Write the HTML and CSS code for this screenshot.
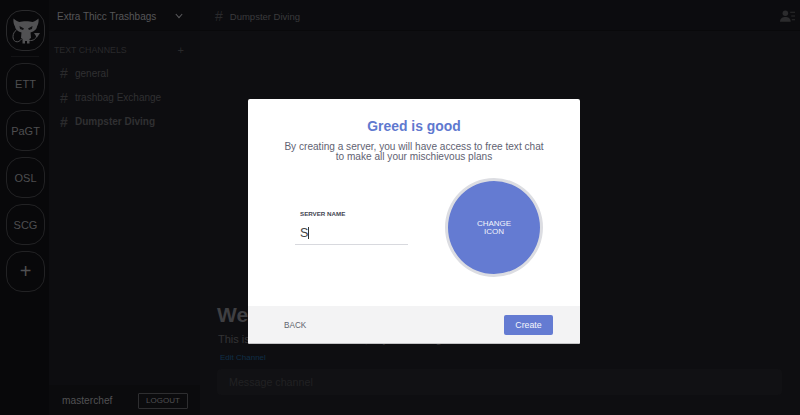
FILE: index.html
```html
<!DOCTYPE html>
<html lang="en">
<head>
<meta charset="utf-8">
<title>Greed is good</title>
<link rel="stylesheet" href="styles.css">
</head>
<body>
<div class="app">
  <nav class="rail">
    <div class="srv logo">
      <svg class="devil" viewBox="0 0 34 34" width="34" height="34">
        <path class="fill" d="M4.500 4.500 C6.500 6.500 8.500 7.500 10.500 8 C13 7 21 7 23.500 8 C25.500 7.500 27.500 6.500 29.500 4.500 C30 8 29 11 28 12.500 C27.500 16.500 23 19 17 19 C11 19 6.500 16.500 6 12.500 C5 11 4 8 4.500 4.500 Z"/>
        <path class="fill" d="M12.500 18 H21.500 L22 24 L20.500 25 V29.500 H18 V27 H16 V29.500 H13.500 V25 L12 24 Z"/>
        <path class="eye" d="M10.500 12 L15 14.500 L14 16 L11 15 Z M23.500 12 L19 14.500 L20 16 L23 15 Z"/>
        <path class="tail" d="M7.500 16 C3 19 3 26 6.500 27.500 C9 28.500 11 27 12.500 25 M20 26.500 C24 27 28 25 28 20"/>
        <path class="fill" d="M25 19 L31 19 L28 23.500 Z"/>
      </svg>
    </div>
    <div class="rule"></div>
    <div class="srv">ETT</div>
    <div class="srv">PaGT</div>
    <div class="srv">OSL</div>
    <div class="srv">SCG</div>
    <div class="srv plus">+</div>
  </nav>
  <aside class="side">
    <header class="side-head">
      <span class="team">Extra Thicc Trashbags</span>
      <svg class="chev" viewBox="0 0 10 7" width="8" height="6"><path d="M1 1 L5 5.500 L9 1"/></svg>
    </header>
    <div class="side-body">
      <div class="cat"><span>TEXT CHANNELS</span><span class="cat-plus">+</span></div>
      <div class="chan"><span class="hash">#</span><span>general</span></div>
      <div class="chan"><span class="hash">#</span><span>trashbag Exchange</span></div>
      <div class="chan active"><span class="hash">#</span><span>Dumpster Diving</span></div>
    </div>
    <footer class="user">
      <span class="uname">masterchef</span>
      <span class="logout">LOGOUT</span>
    </footer>
  </aside>
  <main class="main">
    <header class="top">
      <div class="top-title"><span class="top-hash">#</span><span>Dumpster Diving</span></div>
      <svg class="members" viewBox="0 0 14 12" width="15" height="13">
        <circle cx="5" cy="3" r="2.600"/>
        <path d="M0 11 C0 7.500 2.500 6.500 5 6.500 C7.500 6.500 10 7.500 10 11 Z"/>
        <path d="M9.500 1.500 H14 V2.500 H9.500 Z M10.500 5 H14 V6 H10.500 Z M11 8.500 H14 V9.500 H11 Z"/>
      </svg>
    </header>
    <section class="welcome">
      <h1>Welcome to #Dumpster Diving</h1>
      <p>This is the start of the channel, say something nice</p>
      <a class="edit">Edit Channel</a>
    </section>
    <div class="composer"><span>Message channel</span></div>
  </main>
</div>
<div class="modal">
  <div class="modal-body">
    <h2>Greed is good</h2>
    <p class="lead">By creating a server, you will have access to free text chat<br>to make all your mischievous plans</p>
    <div class="form">
      <div class="field">
        <label class="field-label">SERVER NAME</label>
        <div class="input"><span>S</span><i class="caret"></i></div>
      </div>
      <div class="icon-pick">CHANGE<br>ICON</div>
    </div>
  </div>
  <div class="modal-foot">
    <span class="back">BACK</span>
    <span class="create">Create</span>
  </div>
</div>
</body>
</html>
```
FILE: styles.css
```css
* { box-sizing: border-box; }
html, body { margin: 0; height: 100%; overflow: hidden; }
body { background: #0e0e11; font-family: "Liberation Sans", Arial, sans-serif; color: #444; }
.app { display: flex; height: 415px; }
.rail { width: 49px; flex: none; background: #08080a; padding: 10px 0 0 6px; display: flex; flex-direction: column; gap: 6px; }
.srv { width: 39px; height: 41px; border: 1px solid #222224; border-radius: 16px; display: flex; align-items: center; justify-content: center; font-size: 11px; color: #4e4e50; }
.logo { border-color: #2a2a2c; }
.rule { width: 28px; height: 1px; margin: -1px 0 0 5px; background: #131315; }
.plus { font-size: 20px; font-weight: 400; color: #505052; }
.devil .fill { fill: #515153; }
.devil .eye { fill: #101012; }
.devil .tail { fill: none; stroke: #515153; stroke-width: 1; }
.side { width: 151px; flex: none; display: flex; flex-direction: column; background: #0d0d10; }
.side-head { height: 31px; flex: none; display: flex; align-items: center; justify-content: space-between; padding: 2px 17px 0 8px; border-bottom: 1px solid #09090b; background: #0b0b0d; }
.team { font-size: 10px; color: #565658; }
.chev { fill: none; stroke: #5a5a5c; stroke-width: 1.300; }
.side-body { flex: 1; padding-top: 14px; }
.cat { display: flex; justify-content: space-between; padding: 0 16px 0 5px; font-size: 8.800px; line-height: 11px; color: #29292b; margin-bottom: 5px; }
.cat-plus { font-size: 11px; }
.chan { display: flex; align-items: center; height: 24.400px; padding-left: 11px; font-size: 10px; color: #303032; }
.chan.active { font-weight: 700; }
.hash { font-size: 14px; width: 15px; color: #2a2a2c; }
.user { height: 30px; flex: none; display: flex; align-items: center; justify-content: space-between; padding: 1px 12px 0 13px; background: #0b0b0d; }
.uname { font-size: 10.200px; color: #515153; }
.logout { width: 50px; height: 16px; border: 1px solid #2e2e30; border-radius: 1px; display: flex; align-items: center; justify-content: center; font-size: 8px; color: #505052; }
.main { flex: 1; display: flex; flex-direction: column; min-width: 0; }
.top { height: 31px; flex: none; display: flex; align-items: center; justify-content: space-between; padding: 2px 5px 0 15px; border-bottom: 1px solid #09090b; background: #0c0c0f; }
.top-title { display: flex; align-items: center; gap: 7px; font-size: 9.500px; color: #3b3b3d; }
.top-hash { font-size: 14px; color: #29292b; }
.members { fill: #2b2b2d; }
.welcome { margin-top: auto; padding-left: 17px; }
.welcome h1 { margin: 0; font-size: 21px; line-height: 24px; font-weight: 700; color: #3f3f42; white-space: nowrap; }
.welcome p { margin: 5px 0 0 1px; font-size: 11px; line-height: 14px; color: #333335; white-space: nowrap; }
.edit { display: block; margin: 6px 0 0 3px; font-size: 8px; line-height: 11px; color: #0e2f47; }
.composer { margin: 6px 18px 20px 17px; height: 26px; border-radius: 4px; background: #111114; padding-left: 12px; display: flex; align-items: center; font-size: 10.700px; color: #212123; }
.modal { position: absolute; left: 248px; top: 99px; width: 332px; height: 245px; display: flex; flex-direction: column; background: #fff; border-radius: 2px; overflow: hidden; }
.modal-body { flex: 1; display: flex; flex-direction: column; align-items: center; padding-top: 18px; }
.modal-body h2 { margin: 0; font-size: 13.900px; line-height: 18px; font-weight: 700; color: #5f79cf; }
.lead { margin: 6.500px 0 0; font-size: 10.100px; line-height: 10.500px; text-align: center; color: #5f6272; }
.form { align-self: stretch; display: flex; align-items: center; justify-content: space-between; padding: 15px 37px 0 47px; }
.field { width: 113px; margin-top: 0; }
.field-label { display: block; margin-left: 5px; font-size: 6.200px; line-height: 8px; font-weight: 700; color: #444652; }
.input { margin-top: 5px; height: 22px; padding-left: 5px; border-bottom: 1px solid #d8d9de; display: flex; align-items: center; font-size: 12.500px; color: #444; }
.caret { width: 1px; height: 12px; background: #333; }
.icon-pick { width: 98px; height: 99px; padding-top: 2px; border-radius: 50%; border: 3px solid #dcdde2; background: #647bd2; color: #f3f4fb; display: flex; align-items: center; justify-content: center; text-align: center; font-size: 8px; line-height: 8.500px; }
.modal-foot { height: 38px; flex: none; background: #f3f3f4; border-bottom: 1px solid #c4c4c6; display: flex; align-items: center; justify-content: space-between; padding: 0 27px 0 36px; }
.back { font-size: 8.200px; color: #62646f; padding-top: 2px; }
.create { width: 49px; height: 20px; border-radius: 2px; background: #647bd2; color: #f5f6fc; display: flex; align-items: center; justify-content: center; font-size: 8.800px; }
```
